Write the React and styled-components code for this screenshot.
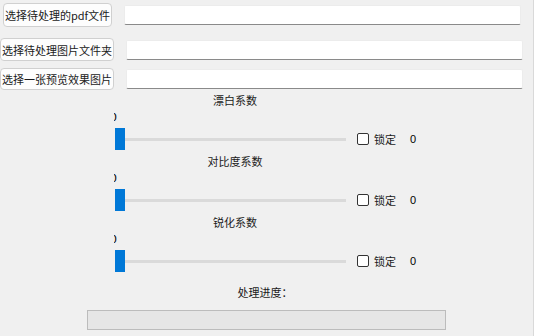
import React from "react";
import styled, { createGlobalStyle } from "styled-components";

const GlobalStyle = createGlobalStyle`
  html, body {
    margin: 0;
    padding: 0;
    background: #f0f0f0;
  }
  body {
    font-family: "Noto Sans CJK SC", "Noto Sans", sans-serif;
    font-size: 11px;
    color: #000;
  }
`;

const Window = styled.div`
  width: 533px;
  height: 336px;
  border-right: 1px solid #d9d9d9;
  background: #f0f0f0;
  overflow: hidden;
  display: flex;
  flex-direction: column;
`;

const FileRow = styled.div`
  display: flex;
  align-items: center;
  height: ${(p) => p.$h}px;
  margin-top: ${(p) => p.$top}px;
  padding-left: ${(p) => p.$left}px;
`;

const PickButton = styled.button`
  box-sizing: border-box;
  width: ${(p) => p.$w}px;
  height: 100%;
  padding: 0;
  border: 1px solid #d0d0d0;
  border-radius: 4px;
  background: #fdfdfd;
  font-family: inherit;
  font-size: 11px;
  color: #1a1a1a;
  white-space: nowrap;
  overflow: hidden;
`;

const PathField = styled.input`
  box-sizing: border-box;
  width: ${(p) => p.$w}px;
  height: 20px;
  margin-left: ${(p) => p.$gap}px;
  border: 1px solid #ececec;
  border-bottom: 1px solid #8a8a8a;
  border-radius: 2px;
  background: #fff;
  outline: none;
`;

const SliderArea = styled.div`
  display: flex;
  flex-direction: column;
  margin-top: 2px;
`;

const Section = styled.div`
  display: flex;
  flex-direction: column;
  gap: 2px;
  height: 61px;
`;

const Title = styled.div`
  width: 240px;
  margin-left: 115px;
  height: 16px;
  line-height: 16px;
  text-align: center;
  color: #1a1a1a;
`;

const ValueBox = styled.div`
  width: 4px;
  height: 16px;
  margin-left: 114px;
  line-height: 16px;
  overflow: hidden;
  font-family: "DejaVu Sans", sans-serif;
  font-size: 11px;
`;

const Clipped = styled.span`
  display: inline-block;
  margin-left: -4px;
`;

const SliderRow = styled.div`
  display: flex;
  align-items: center;
  height: 22px;
  padding-left: 115px;
`;

const Track = styled.div`
  display: flex;
  align-items: center;
  width: 231px;
  height: 22px;
`;

const Handle = styled.div`
  width: 10px;
  height: 22px;
  background: #0078d7;
`;

const Groove = styled.div`
  flex: 1;
  height: 3px;
  background: #dadada;
`;

const Check = styled.span`
  box-sizing: border-box;
  width: 12px;
  height: 12px;
  margin-left: 11px;
  border: 1px solid #333;
  border-radius: 2px;
  background: #fff;
`;

const CheckLabel = styled.span`
  margin-left: 5px;
  color: #1a1a1a;
`;

const LockValue = styled.span`
  margin-left: 14px;
  font-family: "Liberation Sans", sans-serif;
  font-size: 11px;
`;

const ProgressTitle = styled.div`
  margin-top: 9px;
  width: 240px;
  margin-left: 145px;
  height: 16px;
  line-height: 16px;
  text-align: center;
  color: #1a1a1a;
`;

const ProgressBar = styled.div`
  box-sizing: border-box;
  width: 359px;
  height: 20px;
  margin-top: 10px;
  margin-left: 87px;
  border: 1px solid #bcbcbc;
  background: #e6e6e6;
`;

const files = [
  { label: "选择待处理的pdf文件", top: 3, h: 24, left: 3, w: 109, gap: 12, fw: 397 },
  { label: "选择待处理图片文件夹", top: 11, h: 23, left: 0, w: 114, gap: 12, fw: 397 },
  { label: "选择一张预览效果图片", top: 7, h: 22, left: 0, w: 114, gap: 12, fw: 397 },
];

const sliders = ["漂白系数", "对比度系数", "锐化系数"];

export default function App() {
  return (
    <>
      <GlobalStyle />
      <Window>
        {files.map((f) => (
          <FileRow key={f.label} $top={f.top} $h={f.h} $left={f.left}>
            <PickButton $w={f.w}>{f.label}</PickButton>
            <PathField $w={f.fw} $gap={f.gap} readOnly />
          </FileRow>
        ))}
        <SliderArea>
          {sliders.map((name) => (
            <Section key={name}>
              <Title>{name}</Title>
              <ValueBox>
                <Clipped>0</Clipped>
              </ValueBox>
              <SliderRow>
                <Track>
                  <Handle />
                  <Groove />
                </Track>
                <Check />
                <CheckLabel>锁定</CheckLabel>
                <LockValue>0</LockValue>
              </SliderRow>
            </Section>
          ))}
        </SliderArea>
        <ProgressTitle>处理进度：</ProgressTitle>
        <ProgressBar />
      </Window>
    </>
  );
}
